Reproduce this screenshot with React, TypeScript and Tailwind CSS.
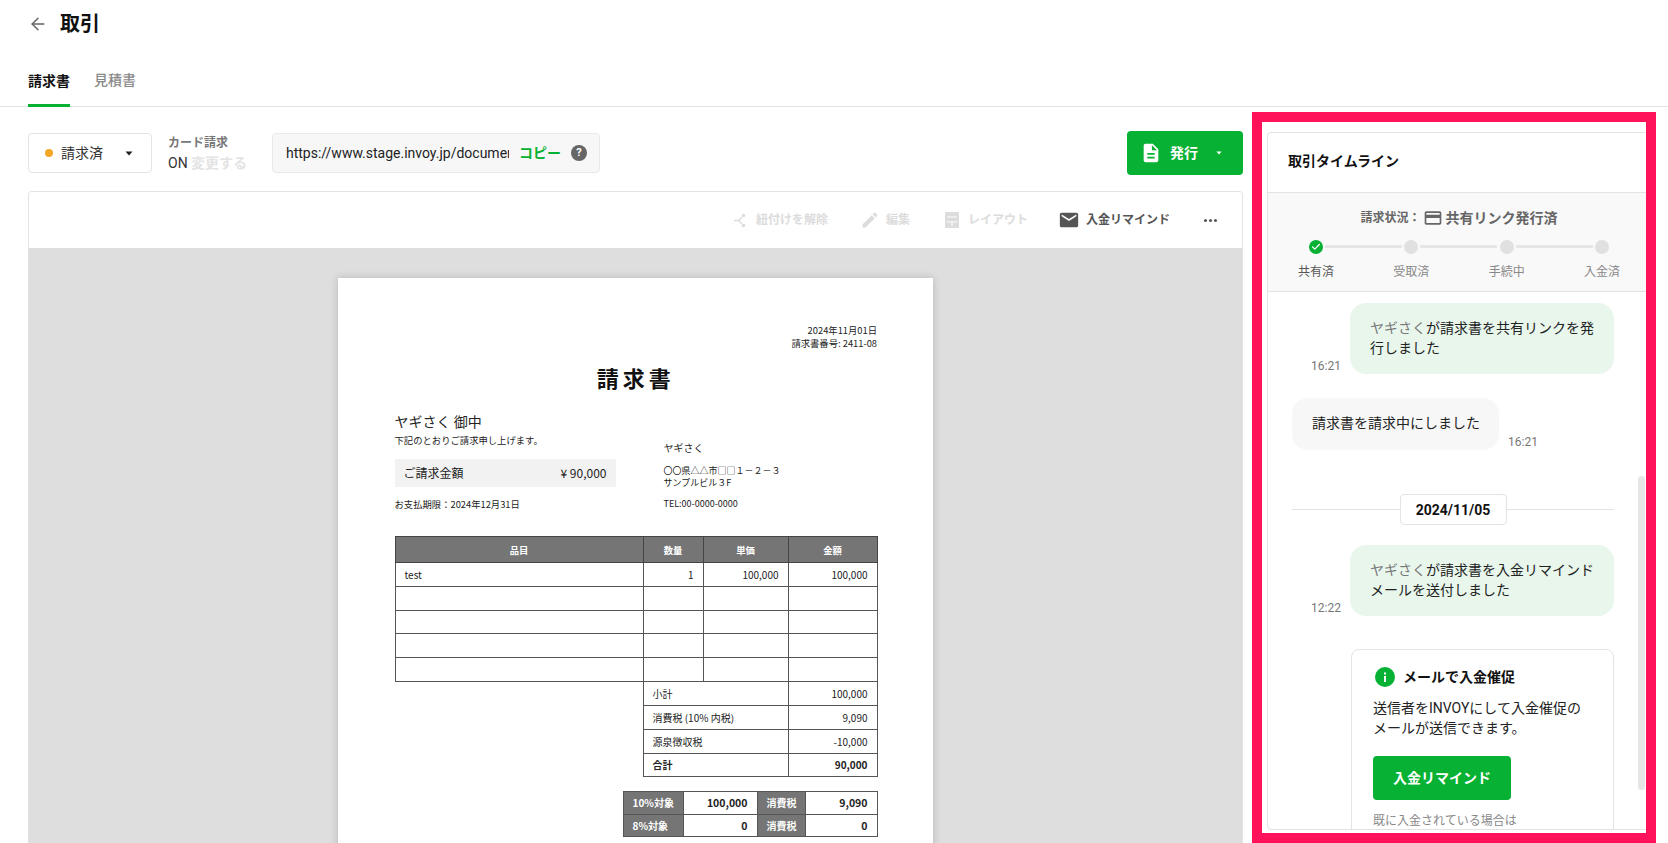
import React from 'react';
import { ArrowLeft, Check } from 'lucide-react';

const Caret = ({ className }: { className: string }) => (
  <svg viewBox="0 0 8 5" className={className} fill="currentColor">
    <path d="M0.5 0.5h7L4 4.5z" />
  </svg>
);

const DocIcon = ({ className }: { className: string }) => (
  <svg viewBox="0 0 24 24" className={className} fill="currentColor">
    <path d="M14 2H6c-1.1 0-1.99.9-1.99 2L4 20c0 1.1.89 2 1.99 2H18c1.1 0 2-.9 2-2V8l-6-6zm2 16H8v-2h8v2zm0-4H8v-2h8v2zm-3-5V3.5L18.5 9H13z" />
  </svg>
);

const Bubble = ({ time, lines }: { time: string; lines: [string, string] }) => (
  <div className="flex items-end justify-end">
    <span className="mr-[9px] text-xs leading-4 text-[#777]">{time}</span>
    <div className="w-[264px] rounded-2xl bg-[#e8f6ec] pt-[15px] pr-[18px] pb-[16px] pl-[20px] text-sm leading-5 text-[#222]">
      <span className="text-[#777]">ヤギさく</span>
      {lines[0]}
      <br />
      {lines[1]}
    </div>
  </div>
);

const steps = ['共有済', '受取済', '手続中', '入金済'];

const itemRows = [
  { name: 'test', qty: '1', price: '100,000', amount: '100,000' },
  { name: '', qty: '', price: '', amount: '' },
  { name: '', qty: '', price: '', amount: '' },
  { name: '', qty: '', price: '', amount: '' },
  { name: '', qty: '', price: '', amount: '' },
];

const totals = [
  { label: '小計', value: '100,000' },
  { label: '消費税 (10% 内税)', value: '9,090' },
  { label: '源泉徴収税', value: '-10,000' },
  { label: '合計', value: '90,000', bold: true },
];

const taxRows = [
  { label: '10%対象', base: '100,000', value: '9,090' },
  { label: '8%対象', base: '0', value: '0' },
];

const Paper = () => (
  <div className="mx-auto mt-[29px] h-[842px] w-[595px] bg-white pt-[46px] pr-[56px] pl-[56.5px] text-[#222] shadow-[0_0_8px_rgba(0,0,0,0.18)] font-['Noto_Sans_CJK_JP',sans-serif]">
    <div className="text-right text-[9.33px] leading-[13px]">
      <p>2024年11月01日</p>
      <p>請求書番号: 2411-08</p>
    </div>
    <h1 className="mt-[12px] text-center text-[22px] font-bold leading-[30px] tracking-[4px] text-[#111]">請求書</h1>
    <div className="mt-[19px] flex">
      <div className="w-[221px]">
        <p className="text-sm leading-5">ヤギさく 御中</p>
        <p className="mt-[2px] text-[9.33px] leading-[14px]">下記のとおりご請求申し上げます。</p>
        <div className="mt-[12px] flex h-[28px] items-center justify-between bg-[#f2f2f2] px-[9px] text-xs">
          <span>ご請求金額</span>
          <span>¥ 90,000</span>
        </div>
        <p className="mt-[10px] text-[9.33px] leading-[14px]">お支払期限：2024年12月31日</p>
      </div>
      <div className="ml-[48px] pt-[29px]">
        <p className="text-[10px] leading-4">ヤギさく</p>
        <p className="mt-[9px] text-[9px] leading-3">〇〇県△△市□□１－２－３</p>
        <p className="text-[9px] leading-3">サンプルビル３F</p>
        <p className="mt-[9px] text-[9px] leading-3">TEL:00-0000-0000</p>
      </div>
    </div>

    <table className="mt-[25px] w-[482px] table-fixed border-collapse text-[10px]">
      <colgroup>
        <col className="w-[248px]" />
        <col className="w-[60px]" />
        <col className="w-[85px]" />
        <col className="w-[89px]" />
      </colgroup>
      <thead>
        <tr className="h-[26px] bg-[#757575] text-[9.33px] text-white">
          {['品目', '数量', '単価', '金額'].map((h) => (
            <th key={h} className="border border-[#444] font-bold">{h}</th>
          ))}
        </tr>
      </thead>
      <tbody>
        {itemRows.map((row, i) => (
          <tr key={i} className="h-[23.8px]">
            <td className="border border-[#555] px-[9px]">{row.name}</td>
            <td className="border border-[#555] px-[9px] text-right">{row.qty}</td>
            <td className="border border-[#555] px-[9px] text-right">{row.price}</td>
            <td className="border border-[#555] px-[9px] text-right">{row.amount}</td>
          </tr>
        ))}
      </tbody>
    </table>
    <table className="ml-[248px] w-[234px] table-fixed border-collapse text-[10px]">
      <colgroup>
        <col className="w-[145px]" />
        <col className="w-[89px]" />
      </colgroup>
      <tbody>
        {totals.map((row) => (
          <tr key={row.label} className={`h-[23.7px] ${row.bold ? 'font-bold' : ''}`}>
            <td className="border border-t-0 border-[#555] px-[9px]">{row.label}</td>
            <td className="border border-t-0 border-[#555] px-[9px] text-right">{row.value}</td>
          </tr>
        ))}
      </tbody>
    </table>
    <table className="mt-[14px] ml-[228px] w-[254px] table-fixed border-collapse text-[10px] font-bold">
      <colgroup>
        <col className="w-[60px]" />
        <col className="w-[74px]" />
        <col className="w-[48px]" />
        <col className="w-[72px]" />
      </colgroup>
      <tbody>
        {taxRows.map((row) => (
          <tr key={row.label} className="h-[22.5px]">
            <td className="whitespace-nowrap border border-[#555] bg-[#757575] pl-[9px] text-white">{row.label}</td>
            <td className="border border-[#555] px-[9px] text-right text-[10.5px]">{row.base}</td>
            <td className="whitespace-nowrap border border-[#555] bg-[#757575] pl-[9px] text-white">消費税</td>
            <td className="border border-[#555] px-[9px] text-right text-[10.5px]">{row.value}</td>
          </tr>
        ))}
      </tbody>
    </table>
  </div>
);

export default function App() {
  return (
    <div className="flex h-[843px] w-[1668px] flex-col overflow-hidden bg-white text-[#111] font-['Roboto','Noto_Sans_CJK_JP',sans-serif]">
      <div className="flex h-[48px] items-center pl-[28px]">
        <ArrowLeft className="h-5 w-5 text-[#666]" strokeWidth={1.75} />
        <h1 className="ml-[12px] text-xl font-bold">取引</h1>
      </div>

      <div className="flex h-[59px] items-end gap-[24px] border-b border-[#e3e3e3] pl-[28px] text-sm">
        <div className="-mb-px h-[47px] border-b-[3px] border-[#06b133] pt-[11px] font-bold leading-5">請求書</div>
        <div className="h-[47px] pt-[11px] font-medium leading-5 text-[#888]">見積書</div>
      </div>

      <div className="flex min-h-0 flex-1">
        <div className="mt-[24px] ml-[28px] flex w-[1215px] flex-col">
          <div className="flex h-[44px] items-center">
            <button className="flex h-[40px] w-[124px] items-center rounded border border-[#e3e3e3] pr-[18px] pl-[16px] text-sm text-[#333]">
              <span className="h-2 w-2 rounded-full bg-[#f5a623]" />
              <span className="ml-[8px]">請求済</span>
              <Caret className="ml-auto h-[5px] w-[8px] text-[#222]" />
            </button>
            <div className="ml-4 w-[104px]">
              <p className="text-xs font-bold leading-4 text-[#777]">カード請求</p>
              <p className="mt-[4px] whitespace-nowrap text-sm leading-4 text-[#333]">
                ON <span className="font-bold text-[#e3e3e3]">変更する</span>
              </p>
            </div>
            <div className="flex h-[40px] w-[328px] items-center rounded border border-[#e9e9e9] bg-[#f7f7f7] pl-[13px] text-sm text-[#222]">
              <span className="w-[223px] overflow-hidden whitespace-nowrap">https://www.stage.invoy.jp/document/share/2411</span>
              <span className="ml-[10px] font-bold text-[#06b133]">コピー</span>
              <span className="ml-[10px] flex h-4 w-4 items-center justify-center rounded-full bg-[#666] text-[11px] font-bold text-white">?</span>
            </div>
            <button className="ml-auto flex h-[44px] w-[116px] items-center rounded bg-[#06b133] pl-[13px] text-sm font-bold text-white">
              <DocIcon className="h-[22px] w-[22px]" />
              <span className="ml-[8px]">発行</span>
              <Caret className="ml-[18px] h-[4px] w-[6px]" />
            </button>
          </div>

          <div className="mt-4 min-h-0 flex-1 overflow-hidden rounded-t border border-b-0 border-[#e3e3e3]">
            <div className="flex h-[56px] items-center justify-end bg-white pr-[25px] text-xs font-bold">
              <div className="flex items-center text-[#dcdcdc]">
                <svg viewBox="0 0 18 18" className="h-[18px] w-[18px]" fill="none" stroke="currentColor" strokeWidth="1.4">
                  <path d="M2 9.5h4.5L10 6M6.5 9.5L10 13" />
                  <circle cx="11.5" cy="4.5" r="1.8" fill="currentColor" stroke="none" />
                  <circle cx="11.5" cy="14.5" r="1.8" fill="currentColor" stroke="none" />
                </svg>
                <span className="ml-[6px]">紐付けを解除</span>
              </div>
              <div className="ml-[32px] flex items-center text-[#dcdcdc]">
                <svg viewBox="0 0 24 24" className="h-5 w-5" fill="currentColor">
                  <path d="M3 17.25V21h3.75L17.81 9.94l-3.75-3.75L3 17.25zM20.71 7.04c.39-.39.39-1.02 0-1.41l-2.34-2.34c-.39-.39-1.02-.39-1.41 0l-1.83 1.83 3.75 3.75 1.83-1.83z" />
                </svg>
                <span className="ml-[6px]">編集</span>
              </div>
              <div className="ml-[33px] flex items-center text-[#dcdcdc]">
                <svg viewBox="0 0 18 18" className="h-[18px] w-[18px]" fill="currentColor">
                  <path fillRule="evenodd" d="M3 1h12a1 1 0 0 1 1 1v14a1 1 0 0 1-1 1H3a1 1 0 0 1-1-1V2a1 1 0 0 1 1-1zm1 4.5v1h10v-1H4zm0 5v1h10v-1H4zm4.5 1v3.5h1v-3.5h-1z" />
                </svg>
                <span className="ml-[7px]">レイアウト</span>
              </div>
              <div className="ml-[30px] flex items-center text-[#555]">
                <svg viewBox="0 0 24 24" className="h-[22px] w-[22px]" fill="currentColor">
                  <path d="M20 4H4c-1.1 0-1.99.9-1.99 2L2 18c0 1.1.9 2 2 2h16c1.1 0 2-.9 2-2V6c0-1.1-.9-2-2-2zm0 4l-8 5-8-5V6l8 5 8-5v2z" />
                </svg>
                <span className="ml-[6px]">入金リマインド</span>
              </div>
              <div className="ml-[34px] flex gap-[2px]">
                <span className="h-[3px] w-[3px] rounded-full bg-[#555]" />
                <span className="h-[3px] w-[3px] rounded-full bg-[#555]" />
                <span className="h-[3px] w-[3px] rounded-full bg-[#555]" />
              </div>
            </div>
            <div className="h-full bg-[#dedede] pt-px">
              <Paper />
            </div>
          </div>
        </div>

        <div className="mt-[5px] ml-[9px] h-[731px] w-[404px] overflow-hidden border-[10px] border-[#ff1259] bg-white pt-[10px] pl-[5px]">
          <div className="relative h-[698px] w-[395px] overflow-hidden rounded border border-[#e3e3e3]">
            <div className="flex h-[60px] items-center border-b border-[#e3e3e3] pb-[3px] pl-[20px] text-sm font-bold">取引タイムライン</div>
            <div className="h-[99px] border-b border-[#e3e3e3] bg-[#f9f9f9]">
              <div className="flex h-[47px] w-[382px] items-center justify-center pt-[3px] text-[#666]">
                <span className="text-xs font-bold">請求状況：</span>
                <svg viewBox="0 0 24 24" className="ml-[2px] h-5 w-5" fill="currentColor">
                  <path d="M20 4H4c-1.11 0-1.99.89-1.99 2L2 18c0 1.11.89 2 2 2h16c1.11 0 2-.89 2-2V6c0-1.11-.89-2-2-2zm0 14H4v-6h16v6zm0-10H4V6h16v2z" />
                </svg>
                <span className="ml-[3px] text-sm font-bold">共有リンク発行済</span>
              </div>
              <div className="mx-[27px] flex w-[328px] items-start justify-between">
                {steps.map((s, i) => (
                  <div key={s} className="relative flex w-[42px] flex-col items-center">
                    {i < 3 && <span className="absolute top-[5px] left-[30px] h-[3px] w-[77px] bg-[#e6e6e6]" />}
                    {i === 0 ? (
                      <span className="flex h-[14px] w-[14px] items-center justify-center rounded-full bg-[#06b133] text-white">
                        <Check className="h-[10px] w-[10px]" strokeWidth={3} />
                      </span>
                    ) : (
                      <span className="h-[14px] w-[14px] rounded-full bg-[#e0e0e0]" />
                    )}
                    <span className={`mt-[10px] text-xs leading-4 ${i === 0 ? 'text-[#555]' : 'text-[#888]'}`}>{s}</span>
                  </div>
                ))}
              </div>
            </div>

            <div className="flex w-[346px] flex-col pt-[11px] pl-[24px]">
              <Bubble time="16:21" lines={['が請求書を共有リンクを発', '行しました']} />
              <div className="mt-[24px] flex items-end">
                <div className="flex h-[52px] w-[207px] items-center rounded-2xl bg-[#f7f7f7] pb-[2px] pl-[20px] text-sm text-[#222]">請求書を請求中にしました</div>
                <span className="ml-[9px] text-xs leading-4 text-[#777]">16:21</span>
              </div>
              <div className="mt-[44px] flex items-center">
                <div className="h-px flex-1 bg-[#e3e3e3]" />
                <div className="flex h-[31px] w-[107px] items-center justify-center rounded border border-[#e3e3e3] text-sm font-bold">2024/11/05</div>
                <div className="h-px flex-1 bg-[#e3e3e3]" />
              </div>
              <div className="mt-[20px]">
                <Bubble time="12:22" lines={['が請求書を入金リマインド', 'メールを送付しました']} />
              </div>
              <div className="mt-[33px] ml-[59px] h-[200px] rounded-lg border border-[#e3e3e3] pt-[17px] pr-[20px] pl-[21px]">
                <div className="flex items-center">
                  <span className="ml-[2px] flex h-5 w-5 items-center justify-center rounded-full bg-[#06b133]">
                    <svg viewBox="0 0 20 20" className="h-5 w-5" fill="white">
                      <rect x="9" y="9" width="2" height="6" />
                      <rect x="9" y="5.5" width="2" height="2" />
                    </svg>
                  </span>
                  <span className="ml-[8px] text-sm font-bold">メールで入金催促</span>
                </div>
                <p className="mt-[11px] text-sm leading-5 text-[#222]">
                  送信者をINVOYにして入金催促の
                  <br />
                  メールが送信できます。
                </p>
                <button className="mt-[18px] h-[44px] w-[138px] rounded bg-[#06b133] text-sm font-bold text-white">入金リマインド</button>
                <p className="mt-[13px] text-xs leading-4 text-[#888]">既に入金されている場合は</p>
              </div>
            </div>
            <div className="absolute top-[343px] left-[370px] h-[314px] w-[7px] rounded bg-[#e6e6e6]" />
          </div>
        </div>
      </div>
    </div>
  );
}
